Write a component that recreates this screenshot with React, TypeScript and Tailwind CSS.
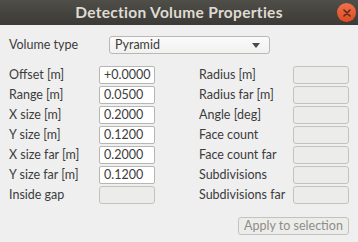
import React from 'react';

const leftRows: { label: string; value?: string }[] = [
  { label: 'Offset [m]', value: '+0.0000' },
  { label: 'Range [m]', value: '0.0500' },
  { label: 'X size [m]', value: '0.2000' },
  { label: 'Y size [m]', value: '0.1200' },
  { label: 'X size far [m]', value: '0.2000' },
  { label: 'Y size far [m]', value: '0.1200' },
  { label: 'Inside gap' },
];

const rightRows = [
  'Radius [m]',
  'Radius far [m]',
  'Angle [deg]',
  'Face count',
  'Face count far',
  'Subdivisions',
  'Subdivisions far',
];

const Field = ({ value }: { value?: string }) =>
  value !== undefined ? (
    <div className="h-[18px] w-[56px] rounded-[2px] border border-[#b8b6b2] bg-white pl-[4px] text-[12.5px] leading-[16px] text-[#3c3c3c]">
      {value}
    </div>
  ) : (
    <div className="h-[18px] w-[56px] rounded-[3px] border border-[#c4c2bf] bg-[#ececeb]" />
  );

const App = () => {
  return (
    <div
      className="flex h-[242px] w-[358px] flex-col bg-[#efefef] text-[#3c3c3c]"
      style={{ fontFamily: 'Lato, "Open Sans", sans-serif' }}
    >
      {/* Title bar */}
      <div className="relative flex h-[25px] items-center justify-center bg-gradient-to-b from-[#504e49] to-[#3b3a36]">
        <span className="text-[15.5px] font-bold tracking-[0.3px] text-[#dfdbd2]">
          Detection Volume Properties
        </span>
        <div className="absolute right-[2px] top-[3px] flex h-[19px] w-[19px] items-center justify-center rounded-full bg-gradient-to-b from-[#f0704a] to-[#df4b1e]">
          <svg width="8" height="8" viewBox="0 0 8 8">
            <path d="M1 1L7 7M7 1L1 7" stroke="#5a2a1a" strokeWidth="1.6" strokeLinecap="round" />
          </svg>
        </div>
      </div>

      <div className="flex flex-1 flex-col px-[9px] pt-[11px] text-[12.5px]">
        {/* Volume type */}
        <div className="flex h-[18px] items-center">
          <span className="w-[100px]">Volume type</span>
          <div className="flex h-[18px] w-[161px] items-center justify-between rounded-[3px] border border-[#bab8b4] bg-gradient-to-b from-[#fbfbfb] to-[#f1f1f0] pl-[5px] pr-[9px]">
            <span>Pyramid</span>
            <svg width="8" height="5" viewBox="0 0 8 5">
              <path d="M0 0H8L4 5Z" fill="#4a4a4a" />
            </svg>
          </div>
        </div>

        {/* Fields */}
        <div className="mt-[12px] flex">
          <div className="flex w-[146px] flex-col gap-[2px]">
            {leftRows.map((r) => (
              <div key={r.label} className="flex h-[18px] items-center">
                <span className="w-[90px]">{r.label}</span>
                <Field value={r.value} />
              </div>
            ))}
          </div>
          <div className="ml-[44px] flex flex-1 flex-col gap-[2px]">
            {rightRows.map((l) => (
              <div key={l} className="flex h-[18px] items-center justify-between">
                <span>{l}</span>
                <Field />
              </div>
            ))}
          </div>
        </div>

        {/* Apply button */}
        <div className="mt-[13px] flex justify-end">
          <div className="flex h-[18px] w-[111px] items-center justify-center rounded-[3px] border border-[#c4c2bf] bg-[#ececeb] text-[#8e8c88]">
            Apply to selection
          </div>
        </div>
      </div>
    </div>
  );
};

export default App;
